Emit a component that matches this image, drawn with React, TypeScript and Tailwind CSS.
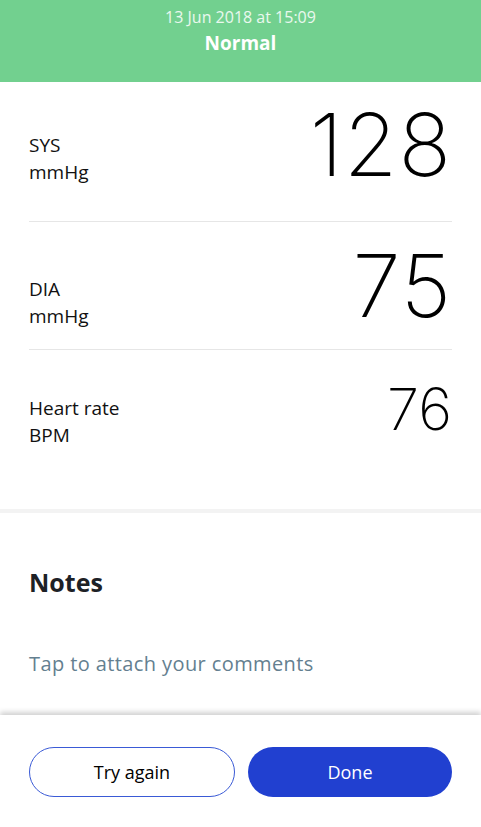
import React from "react";

const sans = { fontFamily: '"Open Sans", "Noto Sans", sans-serif' };

function Row({
  label,
  unit,
  value,
  size,
  className,
}: {
  label: string;
  unit: string;
  value: string;
  size: string;
  className: string;
}) {
  return (
    <div className={`flex justify-between ${className}`}>
      <div className="flex flex-col text-[19px] leading-[27px] text-[#111]">
        <span>{label}</span>
        <span>{unit}</span>
      </div>
      <div
        className={`${size} font-extralight leading-none text-black`}
        style={{ fontFamily: 'Inter, "Open Sans", sans-serif' }}
      >
        {value}
      </div>
    </div>
  );
}

export default function App() {
  return (
    <div className="w-[481px] h-[827px] bg-white flex flex-col overflow-hidden" style={sans}>
      <header className="h-[82px] bg-[#72d08f] flex flex-col items-center pt-[6px]">
        <div className="text-[16px] leading-[22px] text-white/85">13 Jun 2018 at 15:09</div>
        <div className="text-[19px] leading-[30px] font-bold text-white">Normal</div>
      </header>

      <main className="flex-1 flex flex-col">
        <div className="px-[29px]">
          <Row
            label="SYS"
            unit="mmHg"
            value="128"
            size="text-[87px] tracking-[1px]"
            className="items-start h-[140px] pt-[19px] border-b border-[#e6e6e6] [&>div:first-child]:mt-[31px]"
          />
          <Row
            label="DIA"
            unit="mmHg"
            value="75"
            size="text-[87px] tracking-[1px]"
            className="items-start h-[128px] pt-[20px] border-b border-[#e6e6e6] [&>div:first-child]:mt-[34px]"
          />
          <Row
            label="Heart rate"
            unit="BPM"
            value="76"
            size="text-[58px]"
            className="items-start h-[159px] pt-[30px] [&>div:first-child]:mt-[15px]"
          />
        </div>
        <div className="h-[4px] bg-[#f3f3f3]" />
        <div className="flex-1 px-[29px] pt-[52px]">
          <div className="text-[25px] leading-[34px] font-bold text-[#1d2126]">Notes</div>
          <div className="mt-[52px] text-[20px] leading-[26px] tracking-[0.4px] text-[#647f90]">
            Tap to attach your comments
          </div>
        </div>
      </main>

      <footer className="h-[112px] bg-white shadow-[0_-3px_5px_rgba(0,0,0,0.18)] flex gap-[13px] px-[29px] pt-[32px] relative">
        <button className="flex-1 h-[50px] rounded-full border border-[#3a5ad6] bg-white text-[18px] text-black">
          Try again
        </button>
        <button className="flex-1 h-[50px] rounded-full bg-[#2140d0] text-[18px] text-white">
          Done
        </button>
      </footer>
    </div>
  );
}
